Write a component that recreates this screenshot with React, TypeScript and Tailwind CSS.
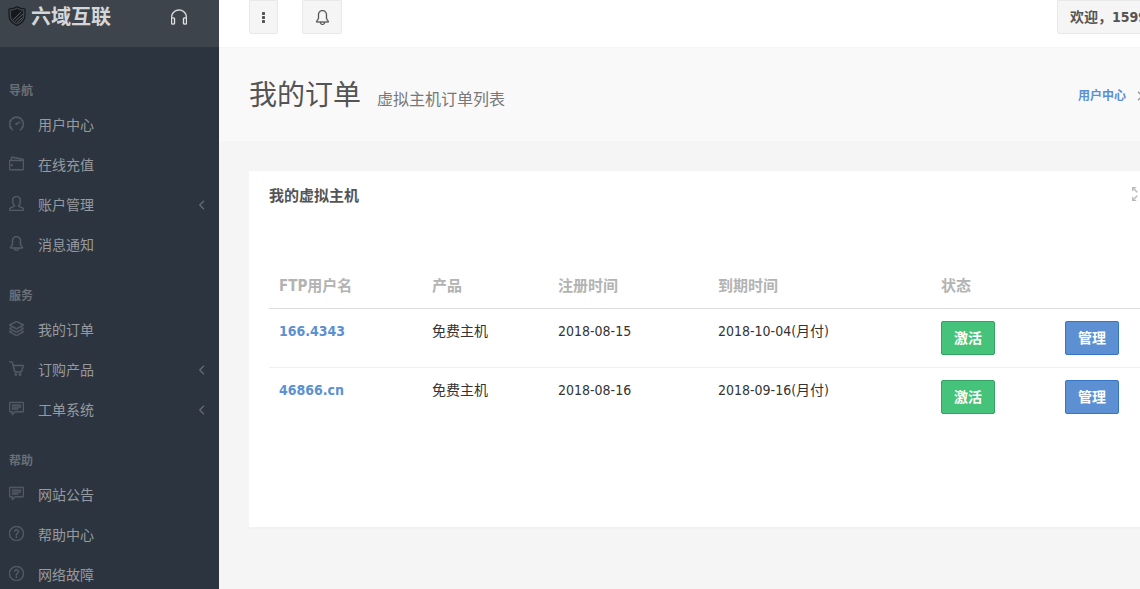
import type { ComponentType } from "react";
import {
  SlSpeedometer, SlWallet, SlUser, SlBell, SlLayers, SlBasket, SlSpeech,
  SlQuestion, SlEarphones, SlSizeFullscreen,
} from "react-icons/sl";
import { FaAngleLeft, FaAngleRight } from "react-icons/fa6";

type Item = { label: string; icon: ComponentType<{ className?: string }>; sub?: boolean };

const groups: { title: string; items: Item[] }[] = [
  {
    title: "导航",
    items: [
      { label: "用户中心", icon: SlSpeedometer },
      { label: "在线充值", icon: SlWallet },
      { label: "账户管理", icon: SlUser, sub: true },
      { label: "消息通知", icon: SlBell },
    ],
  },
  {
    title: "服务",
    items: [
      { label: "我的订单", icon: SlLayers },
      { label: "订购产品", icon: SlBasket, sub: true },
      { label: "工单系统", icon: SlSpeech, sub: true },
    ],
  },
  {
    title: "帮助",
    items: [
      { label: "网站公告", icon: SlSpeech },
      { label: "帮助中心", icon: SlQuestion },
      { label: "网络故障", icon: SlQuestion },
    ],
  },
];

const orders = [
  { name: "166.4343", product: "免费主机", start: "2018-08-15", end: "2018-10-04(月付)" },
  { name: "46866.cn", product: "免费主机", start: "2018-08-16", end: "2018-09-16(月付)" },
];

function Shield() {
  return (
    <svg viewBox="0 0 18 20" className="h-5 w-[18px] shrink-0" aria-hidden="true">
      <path d="M9 .8C6.700 2.300 4 3 1 3v6c0 5 3.200 8.500 8 10.400 4.800-1.900 8-5.400 8-10.400V3c-3 0-5.700-.7-8-2.200Z" fill="#3d444c" stroke="#15191e" strokeWidth="1.200" />
      <path d="M9 2.800C7.200 4 5.200 4.600 3 4.700V9c0 4 2.400 6.700 6 8.400 3.600-1.700 6-4.400 6-8.400V4.700C12.800 4.600 10.800 4 9 2.800Z" fill="#15191e" />
      <path d="M4.800 14 13.500 5.800M6.500 15.800 15 8M8.500 17 14.500 11.500" stroke="#59606a" strokeWidth="1" />
    </svg>
  );
}

function Dots() {
  return (
    <svg viewBox="0 0 3 12" className="h-3 w-[3px]" fill="currentColor" aria-hidden="true">
      <rect y="1" width="3" height="3" rx=".4" />
      <rect y="5" width="3" height="3" rx=".4" />
      <rect y="9" width="3" height="3" rx=".4" />
    </svg>
  );
}

function Sidebar() {
  return (
    <aside className="w-[219px] shrink-0 overflow-hidden bg-[#2c343f]">
      <div className="flex h-[47px] items-start bg-[#3e444c] pt-[6px] pr-8 pl-2">
        <a href="#" className="flex items-start gap-[5px] text-xl leading-[22px] font-bold text-[#d5d6d8]">
          <Shield />
          六域互联
        </a>
        <button type="button" aria-label="客服" className="mt-[3px] ml-auto text-[#e4e5e7]">
          <SlEarphones className="size-4 stroke-current stroke-[24]" />
        </button>
      </div>
      <nav className="pt-7">
        {groups.map((g) => (
          <section key={g.title} className="mb-[15px]">
            <h2 className="flex h-[30px] items-center pt-[2px] pl-[9px] text-xs leading-4 font-bold text-[#696f76]">
              {g.title}
            </h2>
            <ul>
              {g.items.map(({ label, icon: Icon, sub }) => (
                <li key={label}>
                  <a href="#" className="flex h-10 items-center pr-[11px] pl-[9px] text-sm text-[#969a9f]">
                    <Icon className="mr-[14px] mb-[3px] size-[15px] stroke-current stroke-[36] text-[#565d66]" />
                    {label}
                    {sub && <FaAngleLeft className="ml-auto size-3 text-[#62686f]" />}
                  </a>
                </li>
              ))}
            </ul>
          </section>
        ))}
      </nav>
    </aside>
  );
}

const topButton =
  "flex h-[34px] items-center justify-center rounded-b-[2px] border border-[#e9e9e9] bg-[#f5f5f5] text-[#545454]";

export default function App() {
  return (
    <div className="flex h-screen overflow-hidden bg-[#f5f5f5] font-['DejaVu_Sans_Condensed','Open_Sans','Noto_Sans_CJK_SC',sans-serif] text-sm text-[#333]">
      <Sidebar />
      <main className="min-w-0 flex-1 overflow-hidden">
        <div className="min-w-[971px]">
          <header className="flex h-[47px] items-start bg-white px-[30px]">
            <button type="button" aria-label="更多" className={`${topButton} w-[29px]`}>
              <Dots />
            </button>
            <button type="button" aria-label="通知" className={`${topButton} ml-6 w-10`}>
              <SlBell className="size-[15px] stroke-current stroke-[20]" />
            </button>
            <button type="button" className={`${topButton} ml-auto px-3 font-bold whitespace-nowrap`}>
              欢迎，1599
            </button>
          </header>

          <div className="flex h-[94px] items-center justify-between border-t border-[#f5f5f5] bg-[#f9f9f9] px-[30px] pt-[3px]">
            <h1 className="text-[28px] leading-9 text-[#545454]">
              我的订单
              <small className="ml-4 text-base text-[#777]">虚拟主机订单列表</small>
            </h1>
            <ol className="flex items-center text-xs">
              <li><a href="#" className="font-bold text-[#5c90d2]">用户中心</a></li>
              <li className="pr-[14px] pl-2 text-[#999]" aria-hidden="true"><FaAngleRight className="size-3" /></li>
            </ol>
          </div>

          <div className="p-[30px]">
            <section className="bg-white pb-[101px] shadow-[0_2px_rgba(0,0,0,0.01)]">
              <div className="flex h-[50px] items-center justify-between pr-[14px] pl-5">
                <h2 className="pt-[2px] text-[15px] font-bold text-[#545454]">我的虚拟主机</h2>
                <button type="button" aria-label="全屏" className="pb-1 text-[#bababa]">
                  <SlSizeFullscreen className="size-[14px] stroke-current stroke-[50]" />
                </button>
              </div>
              <div className="px-5 pt-[42px]">
                <table className="w-full table-fixed text-left">
                  <colgroup>
                    <col className="w-[153px]" />
                    <col className="w-[126px]" />
                    <col className="w-[160px]" />
                    <col className="w-[223px]" />
                    <col className="w-[124px]" />
                    <col />
                  </colgroup>
                  <thead>
                    <tr className="h-[45px] border-b border-[#ddd] text-[15px] text-[#b3b3b3]">
                      {["FTP用户名", "产品", "注册时间", "到期时间", "状态", ""].map((h) => (
                        <th key={h} className="px-[10px] pt-[2px] font-bold">{h}</th>
                      ))}
                    </tr>
                  </thead>
                  <tbody>
                    {orders.map((o, i) => (
                      <tr key={o.name} className={i > 0 ? "border-t border-[#f0f0f0] align-top" : "align-top"}>
                        <td className="px-[10px] py-3 leading-5">
                          <a href="#" className="font-bold text-[#5c90d2]">{o.name}</a>
                        </td>
                        <td className="px-[10px] py-3 leading-5">{o.product}</td>
                        <td className="px-[10px] py-3 leading-5">{o.start}</td>
                        <td className="px-[10px] py-3 leading-5">{o.end}</td>
                        <td className="px-[10px] py-3">
                          <button type="button" className="flex h-[34px] w-[54px] items-center justify-center rounded-[2px] border border-[#34a263] bg-[#46c37b] font-bold text-white">
                            激活
                          </button>
                        </td>
                        <td className="px-[10px] py-3">
                          <button type="button" className="flex h-[34px] w-[54px] items-center justify-center rounded-[2px] border border-[#3675c5] bg-[#5c90d2] font-bold text-white">
                            管理
                          </button>
                        </td>
                      </tr>
                    ))}
                  </tbody>
                </table>
              </div>
            </section>
          </div>
        </div>
      </main>
    </div>
  );
}
